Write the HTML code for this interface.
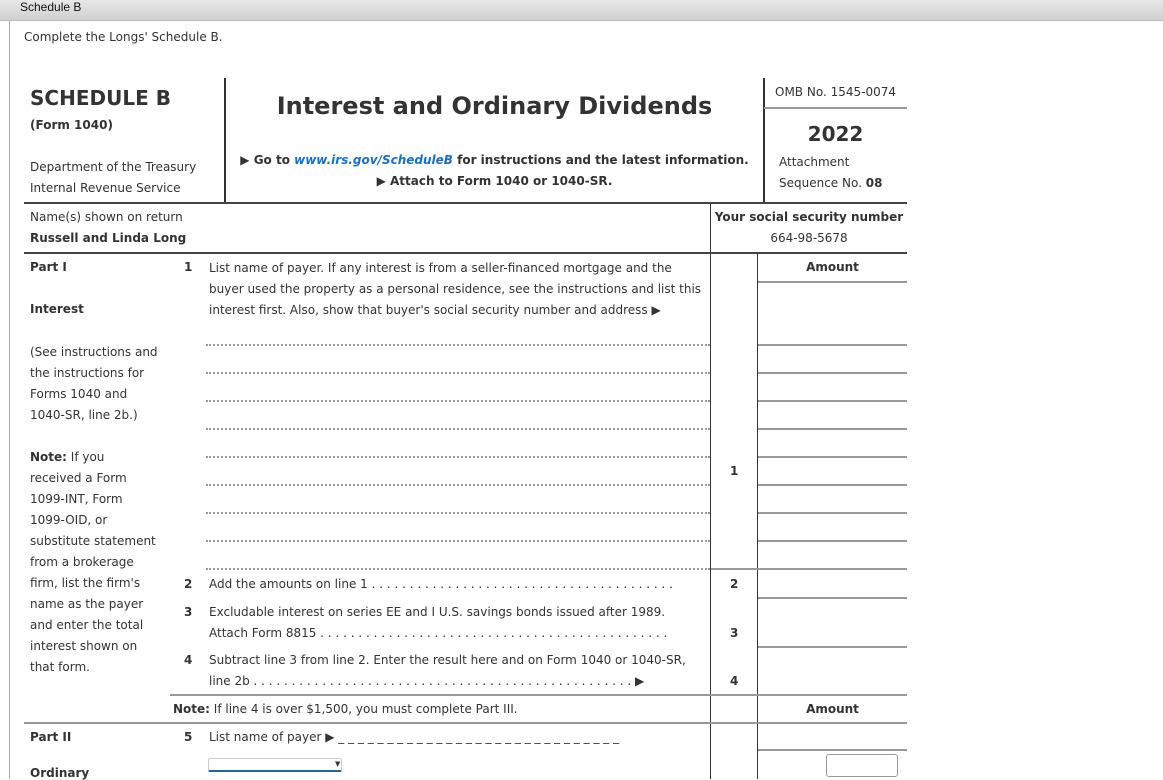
<!DOCTYPE html>
<html><head><meta charset="utf-8"><style>
*{margin:0;padding:0;box-sizing:border-box}
body{width:1163px;height:779px;overflow:hidden;background:#fff;font-family:"DejaVu Sans",Verdana,sans-serif;font-size:12px;color:#333;position:relative}
.a{position:absolute;white-space:nowrap}
.hl{position:absolute;height:2px;background:#999}
.hd{position:absolute;height:2px;background:#444}
.vl{position:absolute;width:1px;background:#333}
.dot{position:absolute;height:0;border-top:2px dotted #999}
b{font-weight:bold}
</style></head><body>
<div class="a" style="left:0;top:0;width:1163px;height:21px;background:linear-gradient(#e8e8e8,#cfcfcf);border-bottom:1px solid #bbb"></div>
<div class="a" style="left:20px;top:0;font-family:'Liberation Sans',Arial,sans-serif;font-size:12px;color:#111;line-height:14px">Schedule B</div>
<div class="a" style="left:9px;top:21px;width:1px;height:758px;background:#aaa"></div>
<div class="a" style="left:24px;top:30px;">Complete the Longs' Schedule B.</div>

<div class="a" style="left:30px;top:86px;font-size:20px;font-weight:bold;">SCHEDULE B</div>
<div class="a" style="left:30px;top:118px;font-weight:bold;">(Form 1040)</div>
<div class="a" style="left:30px;top:160px;">Department of the Treasury</div>
<div class="a" style="left:30px;top:181px;">Internal Revenue Service</div>
<div class="vl" style="left:224px;top:78px;height:126px;width:2px"></div>
<div class="a" style="left:226px;width:537px;top:92px;text-align:center;font-size:24px;font-weight:bold;">Interest and Ordinary Dividends</div>
<div class="a" style="left:226px;width:537px;top:153px;text-align:center;font-weight:bold;">&#9654; Go to <i style="color:#1a6fc4">www.irs.gov/ScheduleB</i> for instructions and the latest information.</div>
<div class="a" style="left:226px;width:537px;top:174px;text-align:center;font-weight:bold;">&#9654; Attach to Form 1040 or 1040-SR.</div>
<div class="vl" style="left:763px;top:78px;height:126px;width:2px"></div>
<div class="a" style="left:775px;top:85px;">OMB No. 1545-0074</div>
<div class="hl" style="left:764px;top:107px;width:143px"></div>
<div class="a" style="left:764px;width:143px;top:122px;text-align:center;font-size:20px;font-weight:bold;">2022</div>
<div class="a" style="left:779px;top:155px;">Attachment</div>
<div class="a" style="left:779px;top:176px;">Sequence No. <b>08</b></div>
<div class="hd" style="left:24px;top:202px;width:883px"></div>

<div class="a" style="left:30px;top:210px;">Name(s) shown on return</div>
<div class="a" style="left:30px;top:231px;font-weight:bold;">Russell and Linda Long</div>
<div class="vl" style="left:710px;top:204px;height:575px"></div>
<div class="a" style="left:711px;width:196px;top:210px;text-align:center;font-weight:bold;">Your social security number</div>
<div class="a" style="left:711px;width:196px;top:231px;text-align:center;">664-98-5678</div>
<div class="hd" style="left:24px;top:252px;width:883px"></div>

<div class="a" style="left:30px;top:260px;font-weight:bold;">Part I</div>
<div class="a" style="left:30px;top:302px;font-weight:bold;">Interest</div>
<div class="a" style="left:30px;top:342px;line-height:21px">(See instructions and<br>the instructions for<br>Forms 1040 and<br>1040-SR, line 2b.)</div>
<div class="a" style="left:30px;top:447px;line-height:21px"><b>Note:</b> If you<br>received a Form<br>1099-INT, Form<br>1099-OID, or<br>substitute statement<br>from a brokerage<br>firm, list the firm's<br>name as the payer<br>and enter the total<br>interest shown on<br>that form.</div>

<div class="a" style="left:184px;top:260px;font-weight:bold;">1</div>
<div class="a" style="left:209px;top:258px;line-height:21px">List name of payer. If any interest is from a seller-financed mortgage and the<br>buyer used the property as a personal residence, see the instructions and list this<br>interest first. Also, show that buyer's social security number and address &#9654;</div>
<div class="vl" style="left:757px;top:254px;height:525px"></div>
<div class="a" style="left:758px;width:149px;top:260px;text-align:center;font-weight:bold;">Amount</div>
<div class="hl" style="left:758px;top:281px;width:149px"></div>
<div class="dot" style="left:206px;top:344px;width:504px"></div>
<div class="dot" style="left:206px;top:372px;width:504px"></div>
<div class="dot" style="left:206px;top:400px;width:504px"></div>
<div class="dot" style="left:206px;top:428px;width:504px"></div>
<div class="dot" style="left:206px;top:456px;width:504px"></div>
<div class="dot" style="left:206px;top:484px;width:504px"></div>
<div class="dot" style="left:206px;top:512px;width:504px"></div>
<div class="dot" style="left:206px;top:540px;width:504px"></div>
<div class="dot" style="left:206px;top:568px;width:504px"></div>
<div class="hl" style="left:758px;top:344px;width:149px"></div>
<div class="hl" style="left:758px;top:372px;width:149px"></div>
<div class="hl" style="left:758px;top:400px;width:149px"></div>
<div class="hl" style="left:758px;top:428px;width:149px"></div>
<div class="hl" style="left:758px;top:456px;width:149px"></div>
<div class="hl" style="left:758px;top:484px;width:149px"></div>
<div class="hl" style="left:758px;top:512px;width:149px"></div>
<div class="hl" style="left:758px;top:540px;width:149px"></div>
<div class="hl" style="left:711px;top:568px;width:196px"></div>
<div class="a" style="left:730px;top:464px;font-weight:bold;">1</div>

<div class="a" style="left:184px;top:577px;font-weight:bold;">2</div>
<div class="a" style="left:209px;top:577px;">Add the amounts on line 1 . . . . . . . . . . . . . . . . . . . . . . . . . . . . . . . . . . . . . . . .</div>
<div class="a" style="left:730px;top:577px;font-weight:bold;">2</div>
<div class="hl" style="left:758px;top:597px;width:149px"></div>
<div class="a" style="left:184px;top:605px;font-weight:bold;">3</div>
<div class="a" style="left:209px;top:602px;line-height:21px">Excludable interest on series EE and I U.S. savings bonds issued after 1989.<br>Attach Form 8815 . . . . . . . . . . . . . . . . . . . . . . . . . . . . . . . . . . . . . . . . . . . . . .</div>
<div class="a" style="left:730px;top:626px;font-weight:bold;">3</div>
<div class="hl" style="left:758px;top:646px;width:149px"></div>
<div class="a" style="left:184px;top:653px;font-weight:bold;">4</div>
<div class="a" style="left:209px;top:650px;line-height:21px">Subtract line 3 from line 2. Enter the result here and on Form 1040 or 1040-SR,<br>line 2b . . . . . . . . . . . . . . . . . . . . . . . . . . . . . . . . . . . . . . . . . . . . . . . . . . &#9654;</div>
<div class="a" style="left:730px;top:674px;font-weight:bold;">4</div>
<div class="hl" style="left:170px;top:694px;width:737px"></div>
<div class="a" style="left:173px;top:702px;"><b>Note:</b> If line 4 is over $1,500, you must complete Part III.</div>
<div class="a" style="left:758px;width:149px;top:702px;text-align:center;font-weight:bold;">Amount</div>
<div class="hl" style="left:24px;top:722px;width:883px"></div>
<div class="a" style="left:30px;top:730px;font-weight:bold;">Part II</div>
<div class="a" style="left:184px;top:730px;font-weight:bold;">5</div>
<div class="a" style="left:209px;top:730px;">List name of payer &#9654; _ _ _ _ _ _ _ _ _ _ _ _ _ _ _ _ _ _ _ _ _ _ _ _ _ _ _ _ _</div>
<div class="hl" style="left:758px;top:749px;width:149px"></div>
<div class="a" style="left:208px;top:758px;width:134px;height:14px;border:1px solid #ccc;border-bottom:2px solid #2a6496;border-radius:2px"></div>
<div class="a" style="left:335px;top:760px;font-size:7px">&#9660;</div>
<div class="a" style="left:826px;top:754px;width:72px;height:23px;border:1px solid #999;border-radius:3px"></div>
<div class="a" style="left:30px;top:766px;font-weight:bold;">Ordinary</div>
</body></html>
